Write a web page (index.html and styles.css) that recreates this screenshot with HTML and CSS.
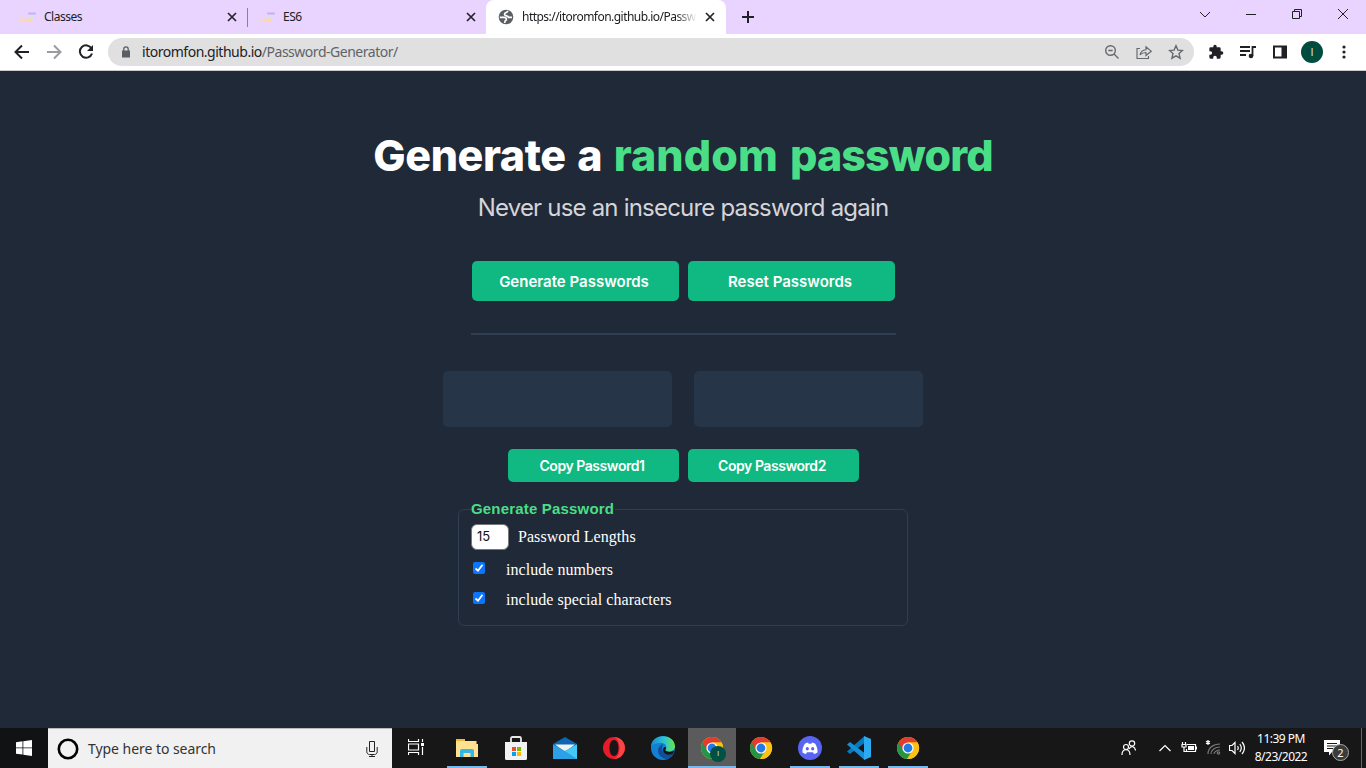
FILE: index.html
```html
<!DOCTYPE html>
<html lang="en">
<head>
<meta charset="utf-8">
<title>Password Generator</title>
<link rel="stylesheet" href="styles.css">
</head>
<body>
<svg class="defs" width="0" height="0">
  <symbol id="chrome" viewBox="0 0 24 24">
    <circle cx="12" cy="12" r="11" fill="#fbc116"/>
    <path d="M12 12 2.500 6.500A11 11 0 0 0 11 23l5.500-8.500z" fill="#249447"/>
    <path d="M2.500 6.500A11 11 0 0 1 21.500 6.500H12l-4.800 8z" fill="#e33b2e"/>
    <path d="M12 6.500h9.600A11 11 0 0 1 11 23l5.800-8.200z" fill="#fbc116"/>
    <circle cx="12" cy="12" r="5.600" fill="#fff"/><circle cx="12" cy="12" r="4.400" fill="#2479e8"/>
  </symbol>
  <symbol id="x" viewBox="0 0 10 10"><path d="M1 1l8 8M9 1L1 9" stroke="#25222a" stroke-width="1.700"/></symbol>
  <symbol id="favicon" viewBox="0 0 16 10"><path d="M9 1.500h6" stroke="#bdb3f7" stroke-width="2" stroke-linecap="round"/><path d="M8 4.500h5" stroke="#dcdff0" stroke-width="1.500"/><path d="M0 8h3M4.500 8h8" stroke="#fcd9a8" stroke-width="3"/></symbol>
</svg>
<div class="screen">
  <header class="tabs">
    <div class="tab"><svg class="fav" viewBox="0 0 16 10"><use href="#favicon"/></svg><span class="tab-title">Classes</span><svg class="close"><use href="#x"/></svg></div>
    <div class="tab second"><svg class="fav" viewBox="0 0 16 10"><use href="#favicon"/></svg><span class="tab-title">ES6</span><svg class="close"><use href="#x"/></svg></div>
    <div class="tab active">
      <svg class="globe" viewBox="0 0 16 16"><circle cx="8" cy="8" r="7.300" fill="#5b5e63"/><path d="M9.800 1.800C9.800 4 6.500 3 6.500 5.200S10.500 6.300 10.500 8.300H14M1.800 8.300H6c2 0 2.500 1.200 2.300 2.700-1.800.2-1.500 1.500-1.500 3" fill="none" stroke="#fff" stroke-width="1.700"/></svg>
      <span class="tab-title fade">https://itoromfon.github.io/Passw</span><svg class="close"><use href="#x"/></svg>
    </div>
    <svg class="new-tab" viewBox="0 0 12 12"><path d="M6 0v12M0 6h12" stroke="#202124" stroke-width="2"/></svg>
    <div class="window-controls">
      <svg viewBox="0 0 12 12"><path d="M1 4l5 5 5-5"/></svg>
      <svg viewBox="0 0 12 12"><path d="M1 6.500h10"/></svg>
      <svg viewBox="0 0 12 12"><path d="M1.500 3.500h7v7h-7zM3.500 3.500v-2h7v7h-2"/></svg>
      <svg viewBox="0 0 12 12"><path d="M1 1l10 10M11 1L1 11"/></svg>
    </div>
  </header>
  <nav class="toolbar">
    <svg viewBox="0 0 16 16"><path d="M15 8H2M8 1.500 1.500 8 8 14.500" fill="none" stroke="#202124" stroke-width="2"/></svg>
    <svg viewBox="0 0 16 16"><path d="M1 8h13M8 1.500 14.500 8 8 14.500" fill="none" stroke="#9b9b9f" stroke-width="2"/></svg>
    <svg viewBox="0 0 16 16"><path d="M13.500 4.500A6.200 6.200 0 1 0 14 9.500" fill="none" stroke="#202124" stroke-width="2"/><path d="M15 1v6H9z" fill="#202124"/></svg>
    <div class="address">
      <svg class="lock" viewBox="0 0 10 12"><path d="M1 4.500h8V11.500H1z" fill="#5b5e63"/><path d="M2.800 5V3a2.200 2.200 0 0 1 4.400 0v2" fill="none" stroke="#5b5e63" stroke-width="1.300"/></svg>
      <span class="url">itoromfon.github.io<span>/Password-Generator/</span></span>
      <svg viewBox="0 0 16 16"><circle cx="6.500" cy="6.500" r="4.800"/><path d="M10 10l4.500 4.500M4.300 6.500h4.400"/></svg>
      <svg class="thin" viewBox="0 0 16 16"><path d="M4 4.500H1v10h11.500V12"/><path d="M4 11C4.800 7.500 6.800 6 10 5.800V2.800L15.300 7.300 10 11.500v-3C7.500 8.500 5.500 9.200 4 11z"/></svg>
      <svg viewBox="0 0 16 16"><path d="M8 1.800l1.900 4.300 4.600.4-3.500 3.100 1.100 4.600L8 11.800l-4.100 2.400L5 9.600 1.500 6.500l4.600-.4z"/></svg>
    </div>
    <svg class="ext" viewBox="0 0 24 24"><path fill="#202124" d="M20.500 11H19V7a2 2 0 0 0-2-2h-4V3.500a2.500 2.500 0 0 0-5 0V5H4a2 2 0 0 0-2 2v3.800h1.500a2.700 2.700 0 0 1 0 5.400H2V20a2 2 0 0 0 2 2h3.800v-1.500a2.700 2.700 0 0 1 5.400 0V22H17a2 2 0 0 0 2-2v-4h1.500a2.500 2.500 0 0 0 0-5z"/></svg>
    <svg viewBox="0 0 16 16"><path d="M0 3h10M0 7h10M0 11h6M12.500 12V3H16" fill="none" stroke="#202124" stroke-width="1.800"/><circle cx="11" cy="12" r="2.300" fill="#202124"/></svg>
    <svg viewBox="0 0 16 16"><path d="M2 2.500h12v11H2z" fill="none" stroke="#202124" stroke-width="2"/><path d="M9.500 2h5v12h-5z" fill="#202124"/></svg>
    <span class="avatar">I</span>
    <svg class="dots" viewBox="0 0 4 16"><g fill="#202124"><circle cx="2" cy="3" r="1.600"/><circle cx="2" cy="8" r="1.600"/><circle cx="2" cy="13" r="1.600"/></g></svg>
  </nav>
  <main class="page">
    <h1>Generate a <span class="green">random <span class="tight">password</span></span></h1>
    <p class="subtitle">Never use an insecure password again</p>
    <div class="row main-buttons"><button>Generate Passwords</button><button>Reset Passwords</button></div>
    <div class="rule"></div>
    <div class="row outputs"><div></div><div></div></div>
    <div class="row copy-buttons"><button>Copy Password1</button><button>Copy Password2</button></div>
    <fieldset>
      <legend>Generate Password</legend>
      <label class="length"><span class="number">15</span>Password Lengths</label>
      <label class="check"><svg viewBox="0 0 12 12"><rect width="12" height="12" rx="2" fill="#0a75ff"/><path d="M2.500 6.500 5 8.700 9.500 2.800" fill="none" stroke="#fff" stroke-width="1.800"/></svg>include numbers</label>
      <label class="check"><svg viewBox="0 0 12 12"><rect width="12" height="12" rx="2" fill="#0a75ff"/><path d="M2.500 6.500 5 8.700 9.500 2.800" fill="none" stroke="#fff" stroke-width="1.800"/></svg>include special characters</label>
    </fieldset>
  </main>
  <footer class="taskbar">
    <div class="start"><svg width="16" height="16" viewBox="0 0 16 16"><path fill="#fff" d="M0 2.300 6.500 1.300v6.200H0zM7.300 1.200 16 0v7.500H7.300zM0 8.300h6.500v6.300L0 13.700zM7.300 8.300H16V16l-8.700-1.200z"/></svg></div>
    <div class="search">
      <svg width="22" height="22" viewBox="0 0 22 22"><circle cx="11" cy="11" r="9.200" fill="none" stroke="#000" stroke-width="2.600"/></svg>
      <span>Type here to search</span>
      <svg width="12" height="16" viewBox="0 0 12 16"><path d="M3.500.5h5v10h-5zM.8 6v4.500c0 2 1.200 3 2.700 3h5c1.500 0 2.700-1 2.700-3V6M6 13.500v2M3 15.500h6" fill="none" stroke="#222"/></svg>
    </div>
    <div class="app view"><svg width="17" height="16" viewBox="0 0 17 16"><path d="M.5 0v2.500h10V0M.5 5h10v6H.5zM.5 16v-2.500h10V16M14.500 0v3M14.500 8v8" fill="none" stroke="#fff" stroke-width="1.200"/><path d="M13 4h3v3h-3z" fill="#fff"/></svg></div>
    <div class="app open"><svg viewBox="0 0 24 24"><path d="M1 3h9v4H1z" fill="#f0b83a"/><path d="M1 5h20.500v3H23v13H1z" fill="#ffe190"/><path d="M5 21v-6q0-2 2-2h10q2 0 2 2v6h-3.500v-4h-7v4z" fill="#35b6e8"/></svg></div>
    <div class="app"><svg viewBox="0 0 24 24"><path d="M7 7V2.500Q7 1 8.500 1h7Q17 1 17 2.500V7" fill="none" stroke="#e8e8e8" stroke-width="1.800"/><path d="M1 6h22v16.500Q23 24 21.500 24h-19Q1 24 1 22.500z" fill="#f2f2f2"/><path d="M8 11h4v4H8z" fill="#f04f24"/><path d="M13 11h4v4h-4z" fill="#7fba00"/><path d="M8 16h4v4H8z" fill="#00a4ef"/><path d="M13 16h4v4h-4z" fill="#ffb900"/></svg></div>
    <div class="app"><svg viewBox="0 0 24 24"><path d="M0 8 12 1l12 7v4H0z" fill="#0d66b4"/><path d="M2 8.500h20L12 16z" fill="#f1f1f1"/><path d="M0 8.500 12 15l12-6.500V23H0z" fill="#2aa2e5"/><path d="M24 8.500V23L12 15z" fill="#45caf8"/></svg></div>
    <div class="app"><svg viewBox="0 0 24 24"><path fill-rule="evenodd" fill="#e81b2b" d="M12 1a11 11 0 1 0 0 22 11 11 0 0 0 0-22zM12 4c2.800 0 4.500 3.500 4.500 8s-1.700 8-4.500 8-4.500-3.500-4.500-8S9.200 4 12 4z"/><path d="M12 1c15 1 14 21 0 22 3.500-1.500 5.500-5.500 5.500-11S15.500 2.500 12 1z" fill="#f84545"/></svg></div>
    <div class="app"><svg viewBox="0 0 24 24"><defs><linearGradient id="edge"><stop stop-color="#168ad5"/><stop offset=".55" stop-color="#2bc5d4"/><stop offset="1" stop-color="#6be642"/></linearGradient></defs><circle cx="12" cy="12" r="12" fill="#1480d4"/><path d="M0 11C0-3 23-3 24 10c0 5-6 7-10 4 3-4 0-7-4-7-5 0-8 1-10 4z" fill="url(#edge)"/><path d="M12 8c-8 3-6 14 4 15 3-1 5-3 6-5-8 3-13-3-10-10z" fill="#104e9c"/><path d="M14 14c2 2.500 6 2.500 9.500.5L22 18c-5 2-10 0-10-4 0-2 1-3 2-3s2 1.500 0 3z" fill="#151617"/></svg></div>
    <div class="app open current"><svg viewBox="0 0 24 24"><use href="#chrome"/></svg><span class="badge">I</span></div>
    <div class="app"><svg viewBox="0 0 24 24"><use href="#chrome"/></svg></div>
    <div class="app open"><svg viewBox="0 0 24 24"><circle cx="12" cy="12" r="12" fill="#5865f2"/><path fill="#fff" fill-rule="evenodd" d="M7 7.500 10 6.500l.7 1.200h2.600l.7-1.200 3 1c2 3 2.800 6 2.500 9-1.200.9-2.300 1.300-3.500 1.500l-1-1.700H9L8 18c-1.200-.2-2.300-.6-3.500-1.500C4.200 13.500 5 10.500 7 7.500zM9.300 11a1.600 1.800 0 1 0 0 3.600 1.600 1.800 0 0 0 0-3.600zm5.400 0a1.600 1.800 0 1 0 0 3.600 1.600 1.800 0 0 0 0-3.600z"/></svg></div>
    <div class="app open"><svg viewBox="0 0 24 24"><path d="M17.500 0v7L3 18 0 15.500z" fill="#0879bf"/><path d="M17.500 24v-7L3 6 0 8.500z" fill="#1590d8"/><path d="M17 0l7 3v18l-7 3z" fill="#2cabf2"/></svg></div>
    <div class="app open"><svg viewBox="0 0 24 24"><use href="#chrome"/></svg></div>
    <div class="tray">
      <svg class="people" viewBox="0 0 16 16"><circle cx="5" cy="7" r="2.500"/><circle cx="11" cy="3.500" r="2.700"/><path d="M1 15c0-7 8-7 8 0M8 9c2-4 6-2.500 6.500 1.500"/></svg>
      <svg class="chev" viewBox="0 0 16 16"><path d="M2.500 11 8 5.500l5.500 5.500"/></svg>
      <svg class="battery" viewBox="0 0 16 16"><path d="M6 4.500h8.500v7h-9V9M15.500 6.500v3M1.500 2v2M4.500 2v2M1 4.500h4v2.500H1zM3 7v4.500h2"/><path d="M7 6h6v4H7z" fill="#fff" stroke="none"/></svg>
      <svg class="wifi" viewBox="0 0 16 16"><path d="M3 0v5M1 1.300l4 2.400M5 1.300 1 3.700"/><g stroke="#777"><path d="M3 14C3 8 8 4 15 4M6 14c0-4 4-7 9-7M9 14c0-2 3-4 6-4"/><circle cx="13.500" cy="13" r="1.200"/></g></svg>
      <svg class="sound" viewBox="0 0 16 16"><path d="M.5 5.500H3L6 2.500v11L3 10.500H.5zM8.500 6q1.500 2 0 4M10.800 4q3 4 0 8M13 2q5 6 0 12"/></svg>
      <div class="clock"><span class="time">11:39 PM</span><span class="date">8/23/2022</span></div>
      <div class="notice"><svg viewBox="0 0 16 16"><path d="M0 0h16v12H8l-3 3.500V12H0z" fill="#fff" stroke="none"/><path d="M3 3.500h10M3 6h10M3 8.500h6" stroke="#191919"/></svg><span>2</span></div>
      <div class="desk"></div>
    </div>
  </footer>
</div>
</body>
</html>
```
FILE: styles.css
```css
* { box-sizing: border-box; }
body { margin: 0; font-family: "Noto Sans", sans-serif; }
.defs { position: absolute; }
svg { display: block; flex: none; }
.screen { width: 1366px; height: 768px; display: flex; flex-direction: column; overflow: hidden; background: #1f2937; }
.tabs { height: 34px; background: #e9d3ff; display: flex; align-items: flex-start; }
.tab { height: 34px; display: flex; align-items: center; width: 247px; padding: 0 10px 0 20px; }
.tab.second { width: 239px; padding-left: 12px; background: linear-gradient(#8e7ba0, #8e7ba0) 0 8px / 1px 19px no-repeat; }
.tab.active { width: 240px; background: #fff; border-radius: 8px 8px 0 0; padding: 0 11px 0 12px; }
.fav { width: 16px; height: 10px; margin-right: 8px; }
.globe { width: 16px; height: 16px; margin-right: 8px; }
.tab-title { flex: 1; min-width: 0; font-size: 12px; letter-spacing: -.5px; color: #202124; white-space: nowrap; line-height: 20px; }
.fade { flex: none; width: 175px; margin-right: auto; letter-spacing: -.53px; -webkit-mask-image: linear-gradient(90deg, #000 88%, transparent); mask-image: linear-gradient(90deg, #000 88%, transparent); }
.close { width: 10px; height: 10px; }
.new-tab { width: 12px; height: 12px; margin: 11px 0 0 16px; }
.window-controls { display: flex; gap: 34px; margin: 8px 17px 0 auto; }
.window-controls svg { width: 12px; height: 12px; fill: none; stroke: #222; stroke-width: 1; }
.toolbar { height: 37px; background: #fff; border-bottom: 1px solid #c9cccf; display: flex; align-items: center; gap: 16px; padding: 0 19px 0 14px; }
.toolbar svg { width: 16px; height: 16px; }
.address { width: 1086px; height: 28px; background: #e0e0e0; border-radius: 14px; margin: 0 -2px 0 -2px; display: flex; align-items: center; gap: 16px; padding: 0 10px 0 13px; }
.address svg { fill: none; stroke: #65686c; stroke-width: 1.4; }
.address .thin { stroke-width: 1.15; }
.address .lock { width: 10px; height: 12px; margin-right: -5px; stroke: none; }
.url { flex: 1; font-size: 14px; letter-spacing: -.48px; color: #202124; line-height: 20px; }
.url span { color: #5f6368; }
.avatar { width: 22px; height: 22px; margin: 0 -3px; border-radius: 50%; background: #004d40; color: #cfdcda; font: 11px/22px "Liberation Sans", sans-serif; text-align: center; }
.toolbar .dots { width: 4px; margin-left: 6px; }
.page { flex: 1; min-height: 0; background: #1f2937; display: flex; flex-direction: column; align-items: center; padding-top: 59px; }
h1 { margin: 0; font: 800 43px/50px Inter, sans-serif; letter-spacing: -.4px; word-spacing: 2.5px; color: #fff; white-space: nowrap; }
.green { color: #4adf86; letter-spacing: .1px; }
.tight { letter-spacing: -.9px; }
.subtitle { margin: 11px 0 0; font: 24px/34px Inter, sans-serif; letter-spacing: -.8px; color: #d5d4d8; }
.row { display: flex; gap: 9px; }
button { border: 0; padding: 0; border-radius: 5px; background: #10b981; color: #fff; font-family: Inter, sans-serif; font-weight: 500; }
.main-buttons { margin-top: 36px; }
.main-buttons button { width: 207px; height: 40px; font-size: 15px; font-weight: 600; letter-spacing: 0; padding: 1px 2px 0 0; }
.rule { width: 425px; height: 2px; background: #2f3e53; margin-top: 32px; }
.outputs { gap: 22px; margin-top: 36px; }
.outputs div { width: 229px; height: 56px; background: #273549; border-radius: 5px; }
.copy-buttons { margin-top: 22px; }
.copy-buttons button { width: 171px; height: 33px; font-size: 14px; font-weight: 600; letter-spacing: -.45px; padding: 0 2px 0 0; }
fieldset { width: 450px; height: 126px; margin: 18px 0 0; padding: 0 12px; border: 1px solid #2f3e53; border-radius: 6px; color: #fff; font: 16px/20px "Liberation Serif", serif; letter-spacing: .05px; }
legend { padding: 0 1px 0 0; color: #4adf86; font: bold 15px/18px "Liberation Sans", sans-serif; letter-spacing: .18px; }
.length { display: flex; align-items: center; gap: 9px; height: 26px; margin-top: 6px; }
.number { width: 38px; height: 26px; background: #fff; border: 1px solid #777; border-radius: 6px; color: #111; font: 13px/23px Inter, sans-serif; padding-left: 5px; }
.check { display: flex; align-items: center; gap: 21px; height: 20px; margin: 10px 0 0 2px; }
.check svg { width: 12px; height: 12px; margin-top: -4px; }
.taskbar { height: 40px; background: #171717; display: flex; align-items: stretch; }
.start { width: 48px; display: flex; align-items: center; justify-content: center; background: #101214; }
.search { width: 344px; background: #f1f1f1; border-top: 1px solid #bbb; display: flex; align-items: center; padding: 0 14px 0 9px; color: #333; font-size: 14px; }
.search span { flex: 1; margin-left: 9px; letter-spacing: -.05px; }
.app { width: 48px; margin-right: 1px; display: flex; align-items: center; justify-content: center; position: relative; border-bottom: 2px solid transparent; padding-top: 2px; }
.app.view { margin-right: 3px; padding: 0; }
.app svg { width: 24px; height: 24px; }
.app.view svg { width: 17px; height: 16px; }
.open { background: linear-gradient(#76b9ed, #76b9ed) center bottom / 40px 2px no-repeat border-box; }
.current { background: linear-gradient(#76b9ed, #76b9ed) bottom / 100% 2px no-repeat border-box, #5b5b5b; }
.badge { position: absolute; left: 22px; top: 18px; width: 16px; height: 16px; border-radius: 50%; background: #005044; color: #cde; font: 8px/16px "Liberation Sans", sans-serif; text-align: center; }
.tray { margin-left: auto; display: flex; align-items: center; color: #fff; }
.tray svg { width: 16px; height: 16px; fill: none; stroke: #fff; stroke-width: 1.2; }
.tray .chev { margin-left: 20px; }
.tray .battery { margin-left: 8px; }
.tray .wifi, .tray .sound { margin-left: 8px; }
.clock { width: 70px; margin-left: 1px; display: flex; flex-direction: column; align-items: center; font-size: 12px; line-height: 18px; letter-spacing: -.5px; }
.notice { position: relative; width: 26px; margin-left: 8px; }
.notice span { position: absolute; left: 8px; top: 4px; width: 17px; height: 17px; border: 1px solid #aaa; border-radius: 50%; background: #3b3b3b; text-align: center; font-size: 11px; line-height: 15px; }
.desk { width: 1px; height: 40px; background: #666; margin: 0 4px 0 11px; }
```
